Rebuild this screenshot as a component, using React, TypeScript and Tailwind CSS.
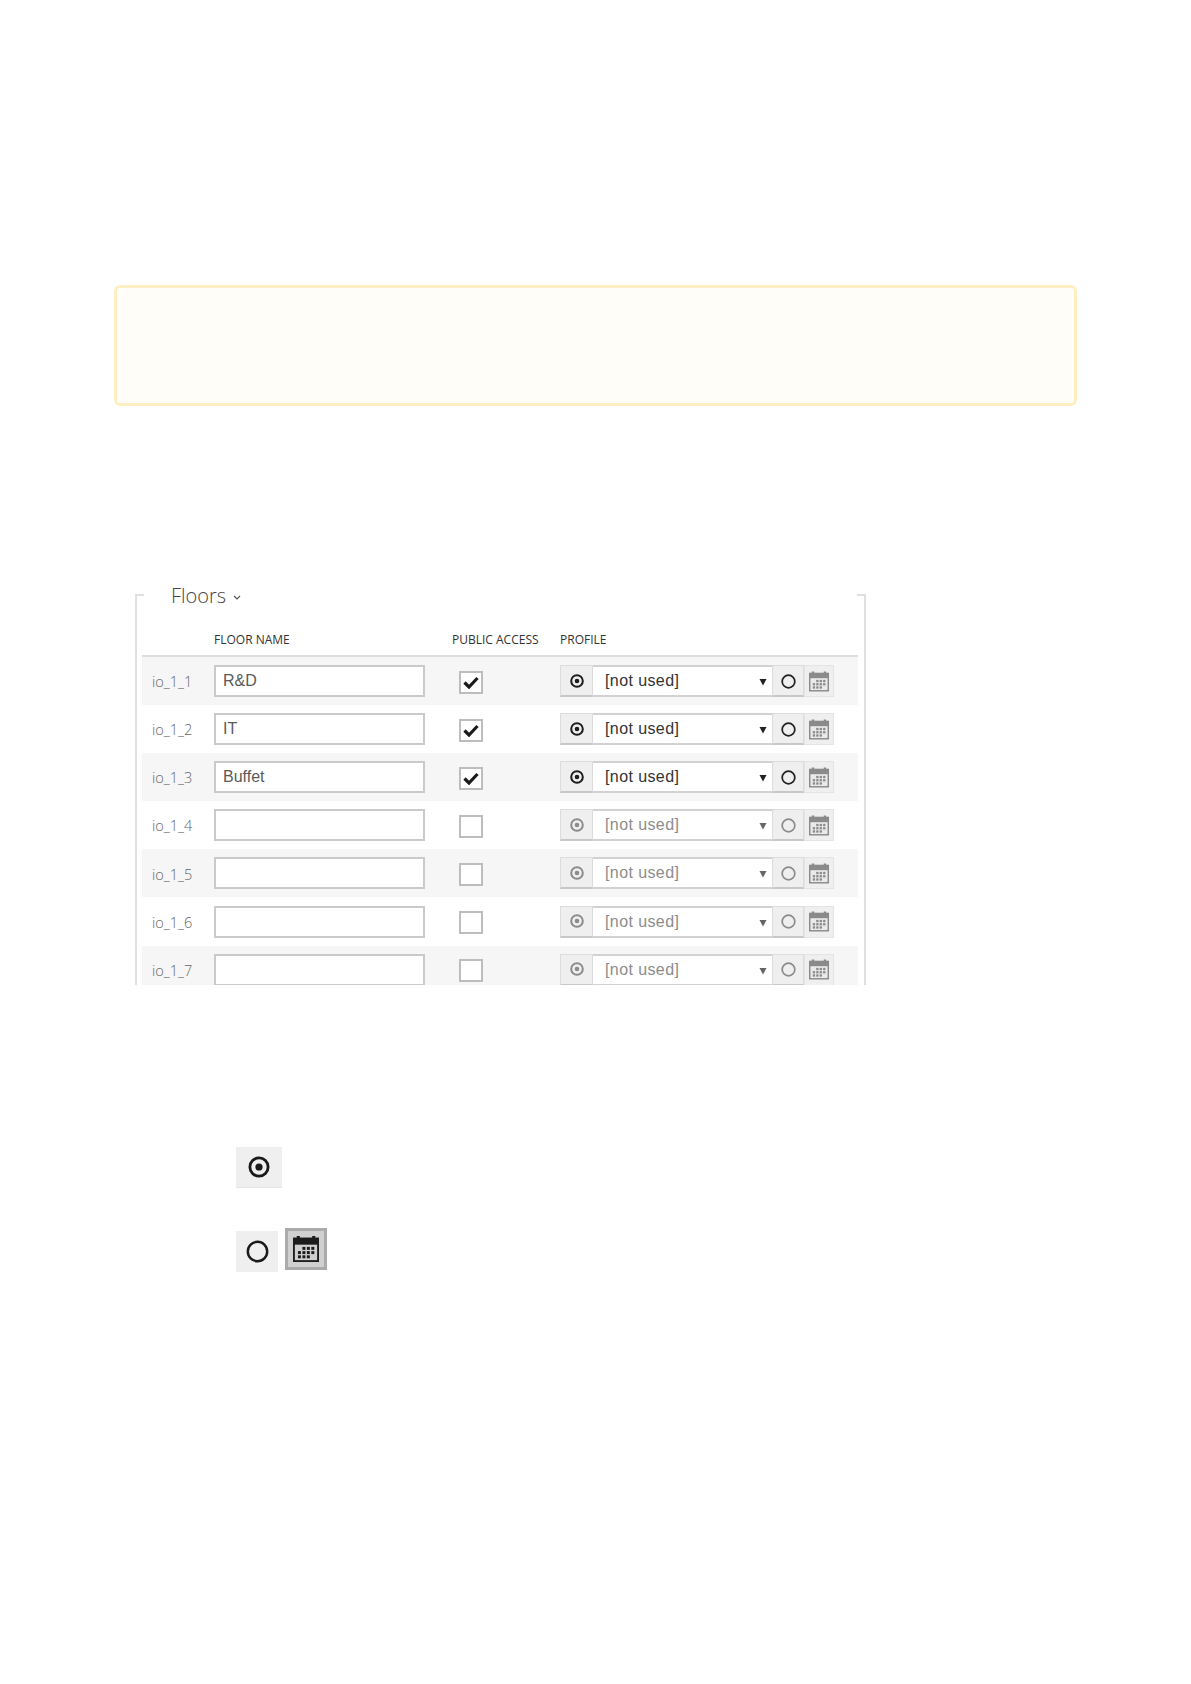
import React from "react";

const Dot = ({ size = 14, color = "#222", sw = 2 }: { size?: number; color?: string; sw?: number }) => (
  <svg width={size} height={size} viewBox="0 0 14 14" className="block">
    <circle cx="7" cy="7" r="5.8" fill="none" stroke={color} strokeWidth={sw} />
    <circle cx="7" cy="7" r="2.3" fill={color} />
  </svg>
);

const Ring = ({ size = 14, color = "#222", sw = 1.6 }: { size?: number; color?: string; sw?: number }) => (
  <svg width={size} height={size} viewBox="0 0 14 14" className="block">
    <circle cx="7" cy="7" r="5.9" fill="none" stroke={color} strokeWidth={sw} />
  </svg>
);

const Calendar = ({ w = 20, h = 21, color = "#8a8a8a", paper = "#e9e9e9" }: { w?: number; h?: number; color?: string; paper?: string }) => (
  <svg width={w} height={h} viewBox="0 0 21 21" className="block">
    <rect x="0.75" y="2" width="19.5" height="18.25" fill={paper} stroke={color} strokeWidth="1.5" />
    <rect x="0.75" y="2" width="19.5" height="5" fill={color} />
    <rect x="3" y="0" width="2.5" height="3" fill={color} />
    <rect x="15.5" y="0" width="2.5" height="3" fill={color} />
    {[8.8, 12.2, 15.6].map((y, r) =>
      [4, 7.6, 11.2, 14.8].map((x, c) =>
        (r === 0 && c === 0) || (r === 2 && c === 3) ? null : (
          <rect key={`${r}-${c}`} x={x} y={y} width="2.4" height="2.4" fill={color} />
        ),
      ),
    )}
  </svg>
);

const rows = [
  { id: "io_1_1", name: "R&D", on: true },
  { id: "io_1_2", name: "IT", on: true },
  { id: "io_1_3", name: "Buffet", on: true },
  { id: "io_1_4", name: "", on: false },
  { id: "io_1_5", name: "", on: false },
  { id: "io_1_6", name: "", on: false },
  { id: "io_1_7", name: "", on: false },
];

function Row({ id, name, on, odd }: { id: string; name: string; on: boolean; odd: boolean }) {
  const ink = on ? "#1c1c1c" : "#8c8c8c";
  return (
    <div className={`flex h-[48.1px] shrink-0 items-center ${odd ? "bg-[#f6f6f6]" : "bg-white"}`}>
      <div className="w-[72px] pl-[10px] pt-[2px] font-['Open_Sans',sans-serif] text-[14.5px] font-light text-[#666]">{id}</div>
      <div className="flex h-[32px] w-[211px] items-center border-2 border-[#cacaca] bg-white pl-[7px] font-['Liberation_Sans',sans-serif] text-[16px] text-[#5a5a5a]">
        {name}
      </div>
      <div className="ml-[34px] mt-[2px] flex h-[23px] w-[24px] items-center justify-center border-2 border-[#bdbdbd] bg-white">
        {on && (
          <svg width="16" height="13" viewBox="0 0 16 13" className="block">
            <path d="M1.5 6.5 L6 11 L14.5 2" fill="none" stroke="#1b1b1b" strokeWidth="3.2" />
          </svg>
        )}
      </div>
      <div className="ml-[77px] flex h-[32px] items-stretch">
        <div className="flex w-[33px] items-center justify-center border border-b-2 border-[#dcdcdc] border-b-[#c8c8c8] bg-[#efefef]">
          <Dot color={ink} />
        </div>
        <div className={`relative flex w-[179px] items-center border-y-2 border-[#d2d2d2] bg-white pl-[12px] font-['Liberation_Sans',sans-serif] text-[16px] tracking-[0.4px] ${on ? "text-[#333]" : "text-[#8c8c8c]"}`}>
          [not used]
          <svg width="8" height="8" viewBox="0 0 8 8" className="absolute right-[5px] top-[11px] block">
            <path d="M0.5 1 H7.5 L4 7.5 Z" fill={on ? "#222" : "#666"} />
          </svg>
        </div>
        <div className="flex w-[32px] items-center justify-center border border-b-2 border-[#dcdcdc] border-b-[#c8c8c8] bg-[#efefef] pt-[1px]">
          <Ring size={15} color={on ? "#222" : "#8c8c8c"} />
        </div>
        <div className="flex w-[30px] items-center justify-center border border-[#e4e4e4] bg-[#efefef]">
          <Calendar />
        </div>
      </div>
    </div>
  );
}

export default function App() {
  return (
    <div className="min-h-[1684px] w-[1191px] bg-white pt-[285px]">
      <div className="ml-[113.5px] h-[121px] w-[963.5px] rounded-[6px] border-[3px] border-[#feefc2] bg-[#fffdf8]" />

      <div className="relative ml-[135px] mt-[188px] flex h-[391px] w-[731px] flex-col border-x-2 border-[#e0e0e0] pl-[5px] pr-[6px]">
        <span className="absolute left-0 top-0 h-[2px] w-[7px] bg-[#e0e0e0]" />
        <span className="absolute right-0 top-0 h-[2px] w-[7px] bg-[#e0e0e0]" />
        <div className="-mt-[10px] flex h-[24px] shrink-0 items-center gap-[7px] pl-[29px] font-['Open_Sans',sans-serif] text-[20px] font-light leading-none text-[#444]">
          Floors
          <svg width="8" height="5" viewBox="0 0 8 5" className="mt-[2px] block">
            <path d="M1 1 L4 4 L7 1" fill="none" stroke="#555" strokeWidth="1.2" />
          </svg>
        </div>
        <div className="flex h-[49px] shrink-0 items-end border-b-2 border-[#dddddd] pb-[6px] font-['Open_Sans',sans-serif] text-[12px] text-[#333]">
          <div className="ml-[72px] w-[238px]">FLOOR NAME</div>
          <div className="w-[108px]">PUBLIC ACCESS</div>
          <div>PROFILE</div>
        </div>
        <div className="flex h-[328px] shrink-0 flex-col overflow-hidden">
          {rows.map((r, i) => (
            <Row key={r.id} id={r.id} name={r.name} on={r.on} odd={i % 2 === 0} />
          ))}
        </div>
      </div>

      <div className="ml-[236px] mt-[162px] flex h-[41px] w-[46px] items-center justify-center border-b border-[#e4e4e4] bg-[#efefef]">
        <Dot size={22} color="#1a1a1a" sw={1.8} />
      </div>
      <div className="ml-[236px] mt-[40px] flex items-end gap-[7px]">
        <div className="flex h-[41px] w-[42px] items-center justify-center bg-[#efefef]">
          <Ring size={23} color="#1a1a1a" sw={1.5} />
        </div>
        <div className="mb-[2px] flex h-[42px] w-[42px] items-center justify-center border-[3px] border-[#ababab] bg-[#d0d0d0]">
          <Calendar w={26} h={28} color="#1c1c1c" paper="#cfcfcf" />
        </div>
      </div>
    </div>
  );
}
